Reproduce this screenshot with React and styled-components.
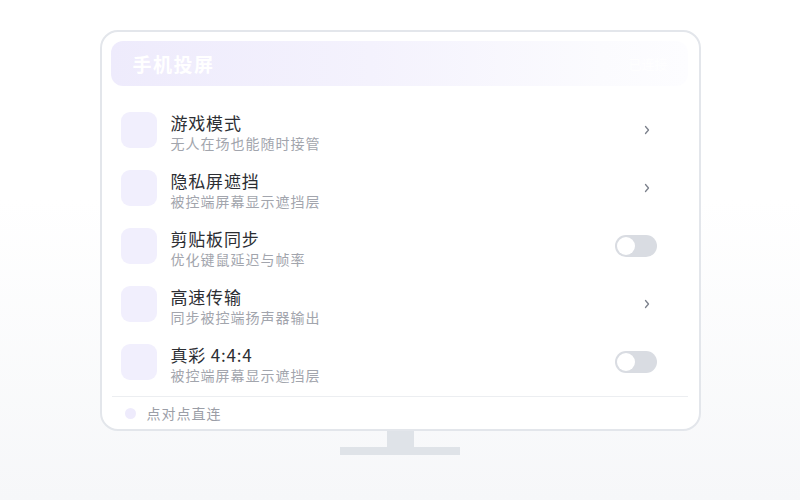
import React from 'react';
import styled, { createGlobalStyle } from 'styled-components';

const GlobalStyle = createGlobalStyle`
  html, body {
    margin: 0;
    padding: 0;
  }
  body {
    font-family: "Noto Sans CJK SC", "Noto Sans", sans-serif;
    background: #fff;
  }
`;

const Page = styled.div`
  width: 800px;
  height: 500px;
  display: flex;
  flex-direction: column;
  align-items: center;
  padding-top: 30px;
  box-sizing: border-box;
  background: linear-gradient(180deg, #ffffff 0%, #ffffff 40%, #f6f7f9 100%);
`;

const Screen = styled.div`
  width: 601px;
  height: 401px;
  box-sizing: border-box;
  border: 2px solid #e3e6eb;
  border-radius: 18px;
  background: #fff;
  padding: 9px 9px 0 9px;
  display: flex;
  flex-direction: column;
`;

const Header = styled.div`
  height: 45px;
  border-radius: 12px;
  background: linear-gradient(90deg, #eeebfc 0%, #f4f2fd 45%, #fbfbfe 85%, #fdfdff 100%);
  display: flex;
  align-items: center;
  justify-content: space-between;
  padding: 0 20px 0 22px;
  margin-right: 2px;
`;

const Title = styled.div`
  color: #fff;
  font-size: 19px;
  letter-spacing: 1.5px;
  font-weight: 700;
`;

const HeaderAside = styled.div`
  color: rgba(255, 255, 255, 0.9);
  font-size: 13px;
`;

const List = styled.div`
  margin-top: 15px;
  display: flex;
  flex-direction: column;
`;

const Row = styled.div`
  height: 58px;
  display: flex;
  align-items: center;
  padding: 0 33px 0 10px;
`;

const IconBox = styled.div`
  width: 36px;
  height: 36px;
  border-radius: 9px;
  background: #f1effd;
  flex-shrink: 0;
`;

const Texts = styled.div`
  flex: 1;
  margin-left: 14px;
  padding-top: 4px;
  display: flex;
  flex-direction: column;
`;

const Name = styled.div`
  font-size: 17px;
  line-height: 22px;
  letter-spacing: 0.8px;
  color: #2c2e33;
`;

const Desc = styled.div`
  font-size: 14px;
  line-height: 18px;
  letter-spacing: 1px;
  color: #a2a5ad;
`;

const Chevron = styled.svg`
  width: 6px;
  height: 10px;
  margin-right: 7px;
`;

const Toggle = styled.div`
  width: 42px;
  height: 22px;
  border-radius: 11px;
  background: #d9dce2;
  display: flex;
  align-items: center;
  padding: 2px;
  box-sizing: border-box;
`;

const Knob = styled.div`
  width: 18px;
  height: 18px;
  border-radius: 50%;
  background: #fff;
`;

const Divider = styled.div`
  height: 1px;
  background: #eceef1;
  margin: 5px 2px 0 1px;
`;

const Footer = styled.div`
  flex: 1;
  display: flex;
  align-items: center;
  padding-left: 14px;
  gap: 11px;
`;

const Dot = styled.div`
  width: 11px;
  height: 11px;
  border-radius: 50%;
  background: #eeebfc;
`;

const FooterText = styled.div`
  font-size: 14px;
  letter-spacing: 1px;
  color: #9b9ea7;
`;

const Neck = styled.div`
  width: 27px;
  height: 16px;
  background: #dfe3e8;
`;

const Base = styled.div`
  width: 120px;
  height: 8px;
  background: #dfe3e8;
`;

const items = [
  { name: '游戏模式', desc: '无人在场也能随时接管', type: 'link' },
  { name: '隐私屏遮挡', desc: '被控端屏幕显示遮挡层', type: 'link' },
  { name: '剪贴板同步', desc: '优化键鼠延迟与帧率', type: 'toggle' },
  { name: '高速传输', desc: '同步被控端扬声器输出', type: 'link' },
  { name: '真彩 4:4:4', desc: '被控端屏幕显示遮挡层', type: 'toggle' },
];

const App = () => {
  return (
    <Page>
      <GlobalStyle />
      <Screen>
        <Header>
          <Title>手机投屏</Title>
          <HeaderAside>已连接</HeaderAside>
        </Header>
        <List>
          {items.map(item => (
            <Row key={item.name}>
              <IconBox />
              <Texts>
                <Name>{item.name}</Name>
                <Desc>{item.desc}</Desc>
              </Texts>
              {item.type === 'toggle' ? (
                <Toggle><Knob /></Toggle>
              ) : (
                <Chevron viewBox="0 0 6 10">
                  <path d="M1.5 1.5 L4.5 5 L1.5 8.5" fill="none" stroke="#7c818c" strokeWidth="1.3" strokeLinecap="round" strokeLinejoin="round" />
                </Chevron>
              )}
            </Row>
          ))}
        </List>
        <Divider />
        <Footer>
          <Dot />
          <FooterText>点对点直连</FooterText>
        </Footer>
      </Screen>
      <Neck />
      <Base />
    </Page>
  );
}

export default App;
